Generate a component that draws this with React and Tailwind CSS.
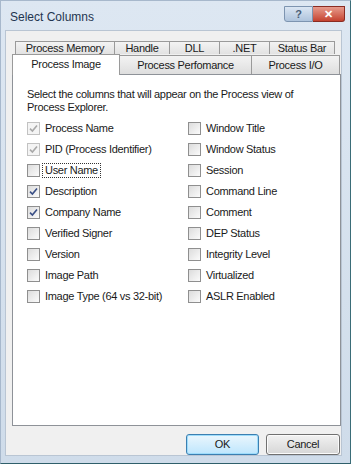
import React from "react";

const font = { fontFamily: '"Liberation Sans", Arial, sans-serif' };

const leftItems = [
  { label: "Process Name", state: "disabled" },
  { label: "PID (Process Identifier)", state: "disabled" },
  { label: "User Name", state: "off", focus: true },
  { label: "Description", state: "on" },
  { label: "Company Name", state: "on" },
  { label: "Verified Signer", state: "off" },
  { label: "Version", state: "off" },
  { label: "Image Path", state: "off" },
  { label: "Image Type (64 vs 32-bit)", state: "off" },
];

const rightItems = [
  "Window Title",
  "Window Status",
  "Session",
  "Command Line",
  "Comment",
  "DEP Status",
  "Integrity Level",
  "Virtualized",
  "ASLR Enabled",
];

const CheckBox = ({ label, state = "off", focus }) => {
  const disabled = state === "disabled";
  const checked = state === "on" || disabled;
  return (
    <div className="flex h-[21px] items-center">
      <div
        className={`flex h-[13px] w-[13px] items-center justify-center border ${
          disabled ? "border-[#c2c2c2] bg-[#f4f4f4]" : "border-[#8f8f8f] bg-gradient-to-br from-[#dcdcdc] to-[#fbfbfb]"
        }`}
      >
        {checked && (
          <svg width="9" height="9" viewBox="0 0 9 9">
            <path
              d="M1 4.6 L3.4 7 L8 1.4"
              fill="none"
              stroke={disabled ? "#a8a8a8" : "#3a4f86"}
              strokeWidth="1.6"
            />
          </svg>
        )}
      </div>
      <span
        className={`ml-[3px] px-[2px] leading-[13px] text-[#1a1a1a] ${
          focus ? "outline outline-1 outline-dotted outline-[#333]" : ""
        }`}
      >
        {label}
      </span>
    </div>
  );
};

const BackTab = ({ label, w }) => (
  <div
    className={`${w} flex h-[13px] items-center justify-center border-l border-t border-r border-[#9a9a9a] bg-gradient-to-b from-[#f3f3f3] to-[#e2e2e2] -mr-px`}
  >
    {label}
  </div>
);

const FrontTab = ({ label, w, selected }) => (
  <div
    className={`${w} flex items-center justify-center border-l border-t border-r border-[#9a9a9a] -mr-px ${
      selected
        ? "relative z-10 -mb-px h-[21px] bg-white pb-[2px]"
        : "h-[19px] bg-gradient-to-b from-[#f3f3f3] to-[#dedede]"
    }`}
  >
    {label}
  </div>
);

export default function App() {
  return (
    <div className="h-[471px] w-[359px] bg-white text-[11px] tracking-[-0.3px]" style={font}>
      <div className="flex h-[464px] w-[351px] flex-col border-b border-r border-l border-t border-b-[#2f5f6a] border-r-[#3a6d78] border-l-[#a7b8cc] border-t-[#a7b8cc] bg-gradient-to-b from-[#dde7f2] to-[#cfdcea]">
        {/* title bar */}
        <div className="flex h-[29px] shrink-0 items-center justify-between pl-[9px] pr-[5px]">
          <span className="pt-[3px] text-[12px] tracking-normal text-[#1f3550]">Select Columns</span>
          <div className="flex -mt-[3px]">
            <div className="flex h-[16px] w-[29px] items-center justify-center rounded-bl-[3px] border border-[#7d94b0] bg-gradient-to-b from-[#dbe6f3] to-[#aec3dc] text-[11px] font-bold text-[#4b5f78]">
              ?
            </div>
            <div className="flex h-[16px] w-[32px] items-center justify-center rounded-br-[3px] border border-l-0 border-[#8a2b22] bg-gradient-to-b from-[#e69a8c] to-[#c4412f] text-[11px] font-bold text-white">
              ✕
            </div>
          </div>
        </div>

        {/* client area */}
        <div className="ml-[4px] mr-[8px] flex flex-1 flex-col border border-[#b9c5d3] bg-[#f0f0f0] pl-[6px] pr-[1px] mb-[7px]">
          <div className="mt-[10px] flex pl-[3px] text-[#1a1a1a]">
            <BackTab label="Process Memory" w="w-[100px]" />
            <BackTab label="Handle" w="w-[56px]" />
            <BackTab label="DLL" w="w-[51px]" />
            <BackTab label=".NET" w="w-[51px]" />
            <BackTab label="Status Bar" w="w-[66px]" />
          </div>
          <div className="flex items-end text-[#1a1a1a]">
            <FrontTab label="Process Image" w="w-[108px]" selected />
            <FrontTab label="Process Perfomance" w="w-[133px]" />
            <FrontTab label="Process I/O" w="w-[89px]" />
          </div>

          {/* tab panel */}
          <div className="h-[352px] w-[329px] border border-[#8e9298] bg-white pl-[14px] pt-[13px]">
            <p className="w-[300px] leading-[13px] text-[#1a1a1a]">
              Select the columns that will appear on the Process view of Process Explorer.
            </p>
            <div className="mt-[4px] flex">
              <div className="w-[161px]">
                {leftItems.map((it) => (
                  <CheckBox key={it.label} {...it} />
                ))}
              </div>
              <div>
                {rightItems.map((label) => (
                  <CheckBox key={label} label={label} />
                ))}
              </div>
            </div>
          </div>

          {/* buttons */}
          <div className="mt-[8px] flex justify-end gap-[7px]">
            <button className="h-[21px] w-[73px] rounded-[3px] border border-[#3c7fb1] bg-gradient-to-b from-[#eaf6fd] to-[#bee6fd] text-[#1a1a1a] shadow-[inset_0_0_0_1px_#9ddcfb]">
              OK
            </button>
            <button className="h-[21px] w-[74px] rounded-[3px] border border-[#707070] bg-gradient-to-b from-[#f2f2f2] to-[#d6d6d6] text-[#1a1a1a] shadow-[inset_0_0_0_1px_#fbfbfb]">
              Cancel
            </button>
          </div>
        </div>
      </div>
    </div>
  );
}
